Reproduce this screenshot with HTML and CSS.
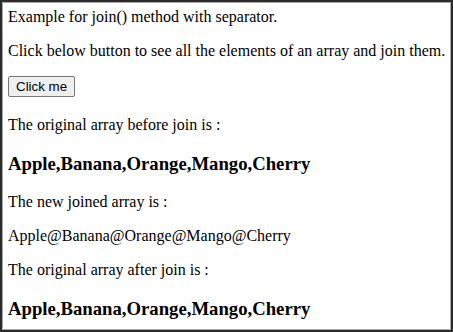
FILE: index.html
```html
<!DOCTYPE html>
<html lang="en">
<head>
  <meta charset="UTF-8">
  <title>JavaScript join() method</title>
  <link rel="stylesheet" href="styles.css">
</head>
<body>
  <div class="frame">
    Example for join() method with separator.
    <p class="intro">Click below button to see all the elements of an array and join them.</p>
    <button id="btn" class="btn">Click me</button>
    <p>The original array before join is :</p>
    <h3 id="before">Apple,Banana,Orange,Mango,Cherry</h3>
    <p>The new joined array is :</p>
    <p id="joined">Apple@Banana@Orange@Mango@Cherry</p>
    <p>The original array after join is :</p>
    <h3 id="after">Apple,Banana,Orange,Mango,Cherry</h3>
  </div>

  <script>
    const fruits = ['Apple', 'Banana', 'Orange', 'Mango', 'Cherry'];

    document.getElementById('btn').addEventListener('click', () => {
      document.getElementById('before').textContent = fruits;
      document.getElementById('joined').textContent = fruits.join('@');
      document.getElementById('after').textContent = fruits;
    });
  </script>
</body>
</html>
```

FILE: styles.css
```css
* {
  box-sizing: border-box;
}
html, body {
  margin: 0;
  height: 100%;
}
body {
  font-family: 'Liberation Serif', 'Times New Roman', serif;
  font-size: 16px;
  color: #000;
  background: #fff;
}

.frame {
  height: 100%;
  padding: 6px 2px 6px 6px;
  border: 2px solid #2b2b2b;
  box-shadow: inset 0 0 0 1px #aaa;
  overflow: hidden;
  line-height: 18px;
}

p {
  margin: 16px 0;
}

.intro {
  white-space: nowrap;
}

h3 {
  font-size: 18.72px;
  font-weight: bold;
  margin: 18.72px 0;
  line-height: 22px;
}

.btn {
  display: block;
  margin-bottom: 19px;
  font-family: 'Liberation Sans', Arial, sans-serif;
  font-size: 13.33px;
  padding: 1px 7px;
  height: 21px;
  color: #000;
  background: #efefef;
  border: 1px solid #767676;
  border-radius: 2px;
}
```
